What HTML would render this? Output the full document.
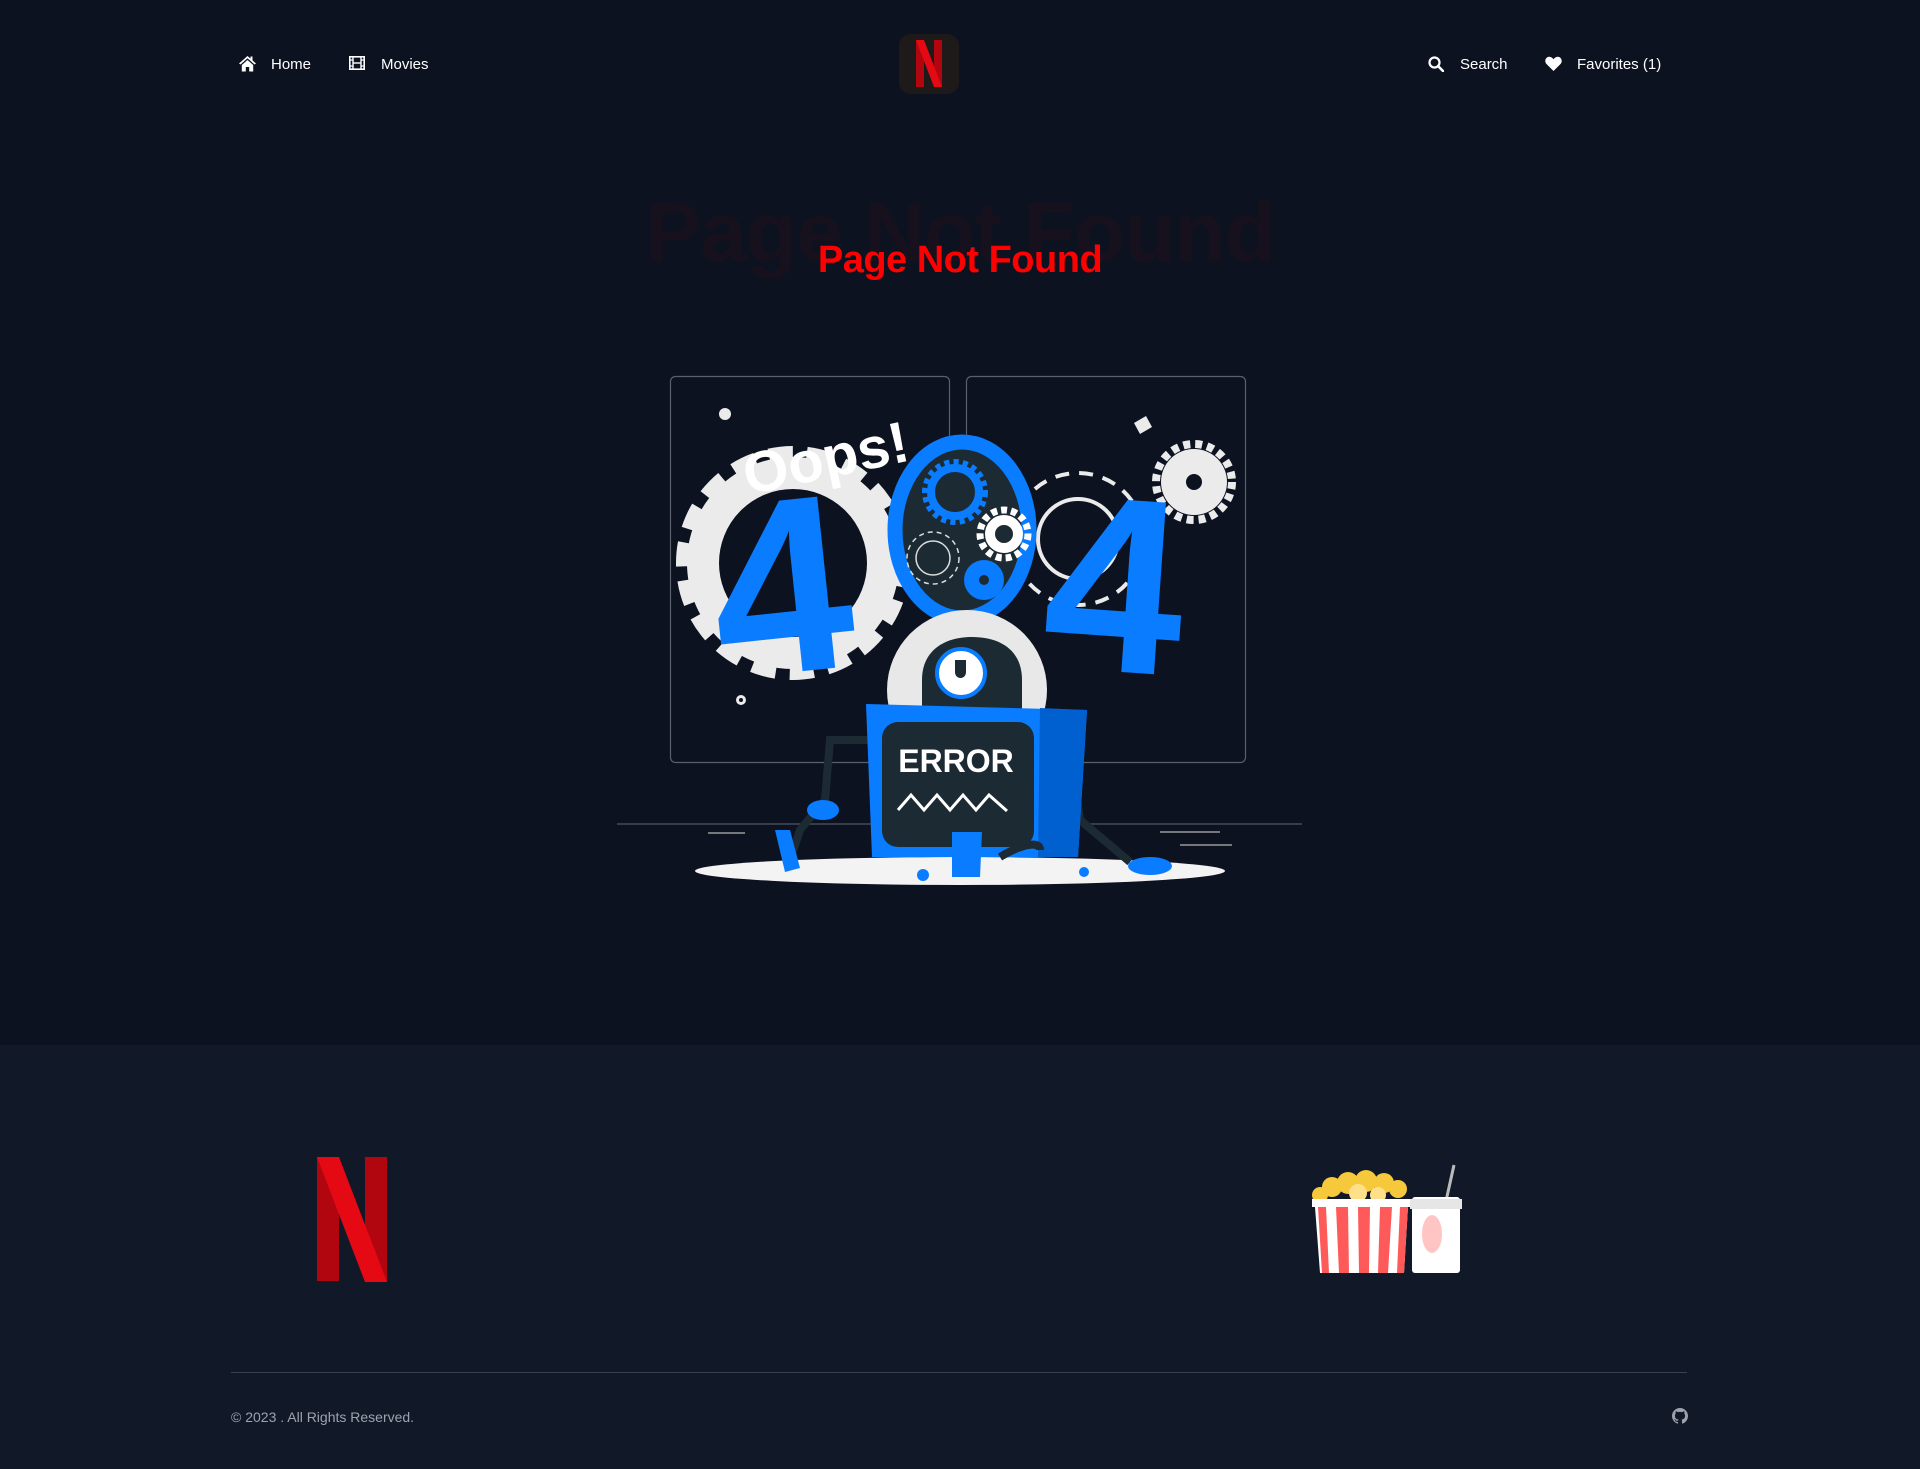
<!DOCTYPE html>
<html><head><meta charset="utf-8">
<style>
*{margin:0;padding:0;box-sizing:border-box}
html,body{width:1920px;height:1469px;background:#0d1220;overflow:hidden;font-family:"Liberation Sans",Arial,sans-serif}
.abs{position:absolute}
.nav{color:#fff;font-size:15px;top:56px;line-height:18px}
footer{position:absolute;left:0;top:1045px;width:1920px;height:424px;background:#111827}
</style></head><body>
<svg class="abs" style="left:238px;top:55px" width="19" height="17" viewBox="0 0 19 17"><path d="M9.5 1 L1 8.5 L2.5 9.5 L9.5 3.3 L16.5 9.5 L18 8.5 L14.5 5.4 V1.5 H12.5 V3.6 Z M3.8 10 L9.5 5 L15.2 10 V16.5 H11.2 V12 H7.8 V16.5 H3.8 Z" fill="#fff"/></svg>
<div class="abs nav" style="left:271px">Home</div>
<svg class="abs" style="left:349px;top:56px" width="16" height="14" viewBox="0 0 16 14"><rect x="0.8" y="0.8" width="14.4" height="12.4" fill="none" stroke="#fff" stroke-width="1.6"/><line x1="4" y1="1" x2="4" y2="13" stroke="#fff" stroke-width="1.4"/><line x1="12" y1="1" x2="12" y2="13" stroke="#fff" stroke-width="1.4"/><line x1="4" y1="7" x2="12" y2="7" stroke="#fff" stroke-width="1.4"/><path d="M1 4H4M1 10H4M12 4H15M12 10H15" stroke="#fff" stroke-width="1.2"/></svg>
<div class="abs nav" style="left:381px">Movies</div>
<div class="abs" style="left:899px;top:34px;width:60px;height:60px;border-radius:12px;background:#1f1a1a"></div>
<svg class="abs" style="left:916px;top:40px" width="26" height="47" viewBox="0 0 26 47"><rect x="0" y="0" width="8" height="47" fill="#b1060f"/><rect x="18" y="0" width="8" height="47" fill="#b1060f"/><polygon points="0,0 8,0 26,47 18,47" fill="#e50914"/></svg>
<svg class="abs" style="left:1428px;top:56px" width="16" height="16" viewBox="0 0 16 16"><circle cx="6.5" cy="6.5" r="5" fill="none" stroke="#fff" stroke-width="2.2"/><line x1="10" y1="10" x2="15" y2="15" stroke="#fff" stroke-width="2.6" stroke-linecap="round"/></svg>
<div class="abs nav" style="left:1460px">Search</div>
<svg class="abs" style="left:1545px;top:56px" width="17" height="15" viewBox="0 0 17 15"><path d="M8.5 15 L1.5 8 C-0.5 6 0 2 3 1 C5.2 0.3 7.2 1.5 8.5 3.3 C9.8 1.5 11.8 0.3 14 1 C17 2 17.5 6 15.5 8 Z" fill="#fff"/></svg>
<div class="abs nav" style="left:1577px">Favorites (1)</div>

<div class="abs" style="left:0;top:182px;width:1920px;text-align:center;font-weight:bold;font-size:84px;color:#17111d;letter-spacing:-1px;line-height:100px">Page Not Found</div>
<div class="abs" style="left:0;top:238px;width:1920px;text-align:center;font-weight:bold;font-size:38px;color:#ff0000;line-height:44px;letter-spacing:-0.5px">Page Not Found</div>

<svg class="abs" style="left:0;top:0" width="1920" height="1045" viewBox="0 0 1920 1045">
<rect x="670.5" y="376.5" width="279" height="386" rx="5" fill="#0d1220" stroke="#5a5f6a" stroke-width="1.2"/>
<rect x="966.5" y="376.5" width="279" height="386" rx="5" fill="#0d1220" stroke="#5a5f6a" stroke-width="1.2"/>
<g transform="translate(793,563)">
<circle r="110" fill="none" stroke="#ebebeb" stroke-width="14" stroke-dasharray="24 14"/>
<circle r="90" fill="none" stroke="#ebebeb" stroke-width="32"/>
<circle r="72" fill="#0d1220"/>
</g>
<g transform="translate(1078,539)" fill="none" stroke="#ebebeb" stroke-width="4">
<circle r="40"/>
<circle r="66" stroke-dasharray="14 10"/>
</g>
<g transform="translate(1194,482)">
<circle r="38" fill="none" stroke="#ebebeb" stroke-width="8" stroke-dasharray="7 5"/>
<circle r="33" fill="#ebebeb"/>
<circle r="8" fill="#0d1220"/>
</g>
<polygon points="1134,423 1146,416 1152,427 1140,434" fill="#ebebeb"/>
<circle cx="725" cy="414" r="6" fill="#ebebeb"/>
<circle cx="741" cy="700" r="5" fill="#ebebeb"/><circle cx="741" cy="700" r="2" fill="#0d1220"/>
<text x="740" y="480" transform="rotate(-12 815 450)" font-family="Liberation Sans" font-weight="bold" font-size="58" fill="#fff">Oops!</text>
<text x="712" y="672" transform="rotate(-6 790 590)" font-family="Liberation Sans" font-weight="bold" font-size="250" fill="#0a7cff">4</text>
<text x="1045" y="672" transform="rotate(4 1125 590)" font-family="Liberation Sans" font-weight="bold" font-size="250" fill="#0a7cff">4</text>
<ellipse cx="962" cy="530" rx="67" ry="88" fill="#1c2b33" stroke="#0a7cff" stroke-width="15"/>
<g transform="translate(955,492)"><circle r="29" fill="none" stroke="#0a7cff" stroke-width="8" stroke-dasharray="5 4"/><circle r="24" fill="none" stroke="#0a7cff" stroke-width="8"/></g>
<g transform="translate(1004,534)"><circle r="24" fill="none" stroke="#fff" stroke-width="7" stroke-dasharray="6 4"/><circle r="14" fill="none" stroke="#fff" stroke-width="10"/></g>
<g transform="translate(933,558)" fill="none" stroke="#ddd" stroke-width="1.5"><circle r="26" stroke-dasharray="5 4"/><circle r="17"/></g>
<g transform="translate(984,580)"><circle r="20" fill="#0a7cff"/><circle r="5" fill="#1c2b33"/></g>
<circle cx="967" cy="690" r="80" fill="#e8e8e8"/>
<path d="M922 712 V680 C922 650 945 637 972 637 C1000 637 1022 650 1022 680 V712 Z" fill="#1c2b33"/>
<circle cx="961" cy="673" r="24" fill="#fff" stroke="#0a7cff" stroke-width="4"/>
<path d="M955 660 V672 C955 680 966 680 966 672 V660" fill="#1c2b33"/>
<line x1="617" y1="824" x2="1302" y2="824" stroke="#454b57" stroke-width="1.5"/>
<ellipse cx="960" cy="871" rx="265" ry="14" fill="#f3f3f3"/>
<path d="M708 833 H745 M1160 832 H1220 M1180 845 H1232" stroke="#999" stroke-width="1.5"/>
<path d="M880 740 H830 L825 800 L800 830 L790 860" fill="none" stroke="#1c2b33" stroke-width="8"/>
<path d="M1070 745 L1080 820 L1130 862" fill="none" stroke="#1c2b33" stroke-width="8"/>
<ellipse cx="823" cy="810" rx="16" ry="10" fill="#0a7cff"/>
<polygon points="775,830 790,830 800,868 785,872" fill="#0a7cff"/>
<ellipse cx="1150" cy="866" rx="22" ry="9" fill="#0a7cff"/>
<ellipse cx="1070" cy="755" rx="12" ry="25" fill="#1c2b33"/>
<polygon points="866,704 1087,710 1078,857 872,857" fill="#0a7cff"/>
<polygon points="1040,708 1087,710 1078,857 1038,857" fill="#0060d0"/>
<rect x="882" y="722" width="152" height="125" rx="16" fill="#1c2b33"/>
<text x="956" y="772" text-anchor="middle" font-family="Liberation Sans" font-weight="bold" font-size="32" fill="#fff">ERROR</text>
<polyline points="898,810 911,795 924,810 937,795 950,810 963,795 976,810 989,795 1007,811" fill="none" stroke="#fff" stroke-width="3"/>
<polygon points="952,832 982,832 980,877 952,877" fill="#0a7cff"/>
<path d="M1000 857 C1020 845 1040 840 1040 850" fill="none" stroke="#1c2b33" stroke-width="8"/>
<circle cx="923" cy="875" r="6" fill="#0a7cff"/><circle cx="1084" cy="872" r="5" fill="#0a7cff"/>
</svg>

<footer>
<svg class="abs" style="left:317px;top:112px" width="70" height="125" viewBox="0 0 70 125"><rect x="0" y="0" width="22" height="124" fill="#b1060f"/><rect x="48" y="0" width="22" height="125" fill="#b1060f"/><polygon points="0,0 22,0 70,125 48,125" fill="#e50914"/></svg>
<svg class="abs" style="left:1308px;top:116px" width="160" height="114" viewBox="0 0 160 114">
<line x1="138" y1="40" x2="146" y2="4" stroke="#bbb" stroke-width="3"/>
<rect x="104" y="36" width="48" height="76" rx="3" fill="#fff"/>
<rect x="102" y="38" width="52" height="10" fill="#e6e6e6"/>
<ellipse cx="124" cy="73" rx="10" ry="19" fill="#ffc4c4"/>
<g fill="#f5c93b"><circle cx="12" cy="34" r="8"/><circle cx="24" cy="26" r="10"/><circle cx="40" cy="22" r="11"/><circle cx="58" cy="20" r="11"/><circle cx="76" cy="22" r="10"/><circle cx="90" cy="28" r="9"/><circle cx="50" cy="32" r="9" fill="#ffe08a"/><circle cx="70" cy="34" r="8" fill="#ffe08a"/></g>
<rect x="4" y="38" width="98" height="8" fill="#fff"/>
<polygon points="7,46 100,46 96,112 12,112" fill="#fff"/>
<g fill="#ff5a5a"><polygon points="10,46 18,46 21,112 14,112"/><polygon points="28,46 40,46 41,112 31,112"/><polygon points="50,46 62,46 61,112 51,112"/><polygon points="72,46 84,46 80,112 70,112"/><polygon points="92,46 100,46 96,112 89,112"/></g>
</svg>
<div class="abs" style="left:231px;top:327px;width:1456px;height:1px;background:#374151"></div>
<div class="abs" style="left:231px;top:364px;color:#9ca3af;font-size:14px">© 2023 . All Rights Reserved.</div>
<svg class="abs" style="left:1672px;top:363px" width="16" height="16" viewBox="0 0 16 16"><path fill="#9ca3af" d="M8 0C3.58 0 0 3.58 0 8c0 3.540 2.290 6.530 5.470 7.590.4.07.55-.17.55-.38v-1.330c-2.230.48-2.700-1.070-2.700-1.070-.36-.92-.89-1.170-.89-1.170-.73-.5.06-.49.06-.49.8.06 1.230.83 1.230.83.72 1.220 1.870.87 2.330.66.07-.52.28-.87.51-1.070-1.780-.2-3.640-.89-3.640-3.950 0-.87.31-1.590.82-2.150-.08-.2-.36-1.020.08-2.120 0 0 .67-.21 2.200.82a7.600 7.600 0 014 0c1.530-1.040 2.200-.82 2.200-.82.44 1.100.16 1.920.08 2.120.51.56.82 1.270.82 2.150 0 3.070-1.870 3.750-3.650 3.950.29.25.54.73.54 1.480v2.200c0 .21.15.46.55.38A8.010 8.010 0 0016 8c0-4.420-3.580-8-8-8z"/></svg>
</footer>
</body></html>
